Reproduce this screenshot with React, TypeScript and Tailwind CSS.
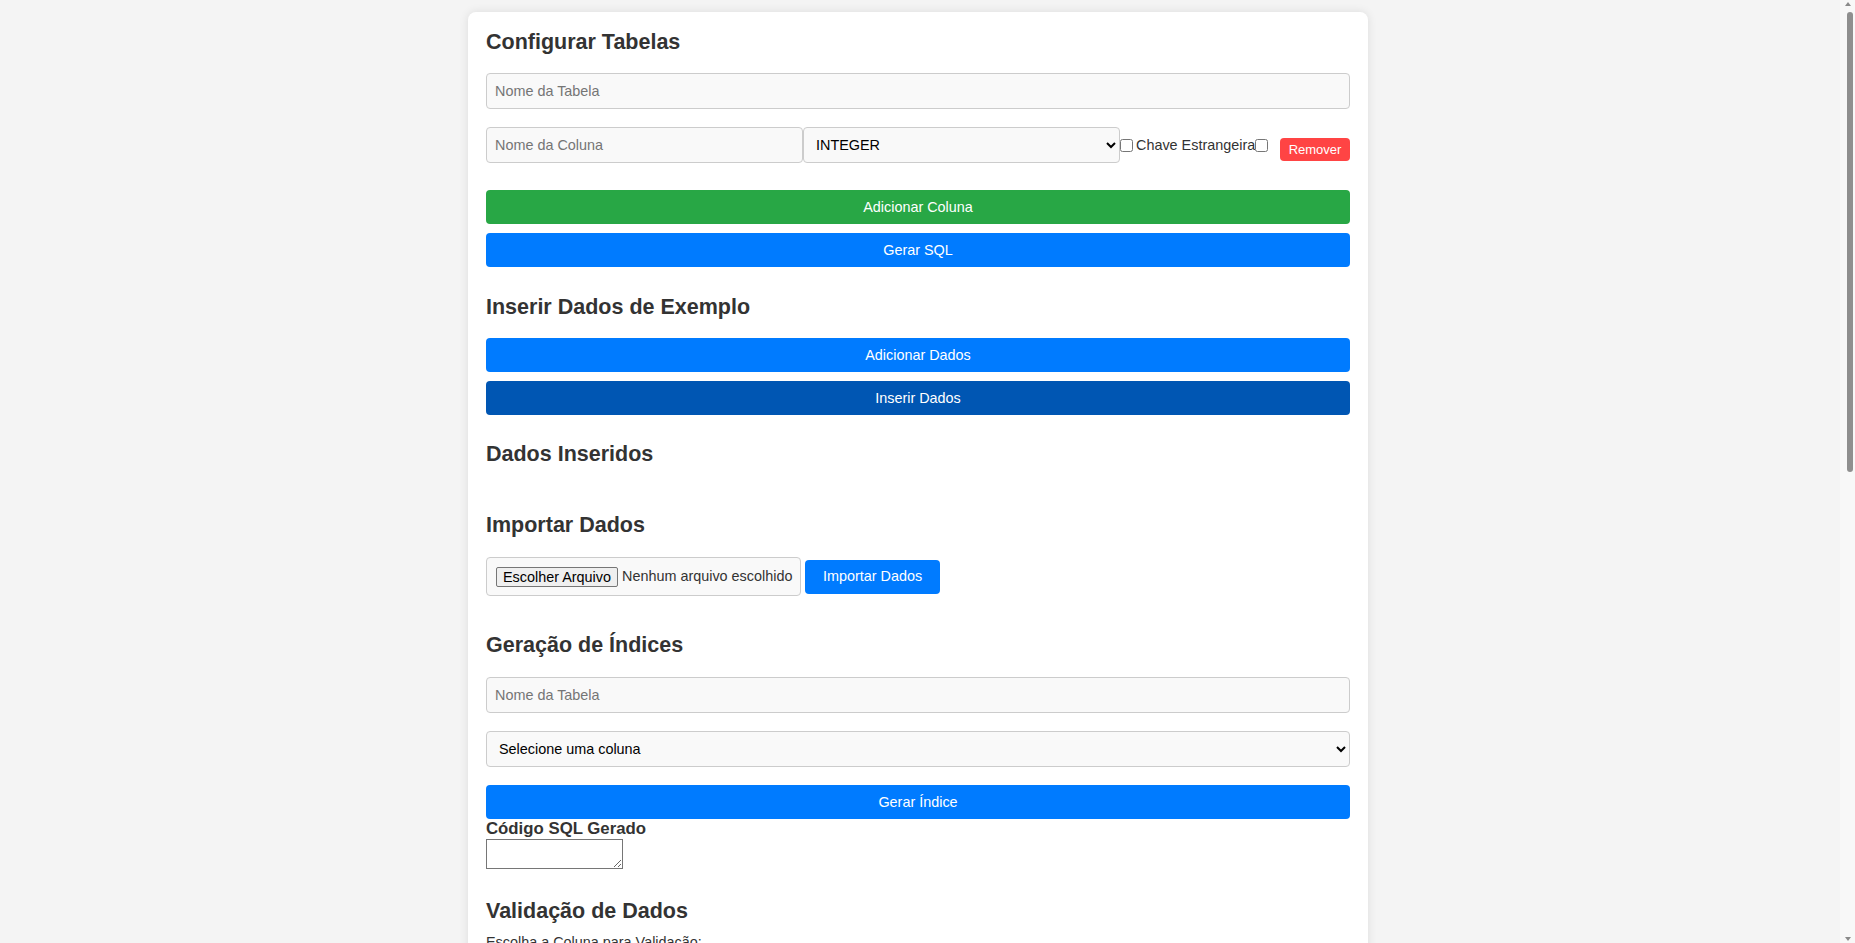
const inputCls =
  "block w-full h-[36px] px-[8px] bg-[#f9f9f9] border border-[#cccccc] rounded-[4px] text-[14.4px] text-[#333] placeholder:text-[#757575] outline-none";
const selectCls =
  "block w-full h-[36px] px-[8px] bg-[#f9f9f9] border border-[#cccccc] rounded-[4px] text-[14.4px] text-black outline-none";
const btnCls =
  "block w-full h-[34px] rounded-[4px] text-white text-[14.4px] leading-[34px] text-center";
const h2Cls = "text-[21.5px] leading-[24px] font-bold text-[#333]";

function SectionTitle({ children, className = "" }: { children: React.ReactNode; className?: string }) {
  return <h2 className={`${h2Cls} ${className}`}>{children}</h2>;
}

// window scrollbar as it shows in the screenshot
function FakeScrollbar() {
  return (
    <div className="fixed top-0 right-0 w-[15px] h-screen bg-[#f8f8f8]">
      <div className="absolute top-[2px] left-[5px] w-0 h-0 border-l-[3px] border-r-[3px] border-b-[4px] border-l-transparent border-r-transparent border-b-[#8a8a8a]" />
      <div className="absolute top-[12px] right-[2px] w-[6px] h-[460px] rounded-full bg-[#8f8f8f]" />
      <div className="absolute bottom-[2px] left-[5px] w-0 h-0 border-l-[3px] border-r-[3px] border-t-[4px] border-l-transparent border-r-transparent border-t-[#8a8a8a]" />
    </div>
  );
}

export default function App() {
  return (
    <div
      className="min-h-screen bg-[#f4f4f4] text-[#333] pr-[19px]"
      style={{ fontFamily: '"Liberation Sans", Arial, sans-serif' }}
    >
      <FakeScrollbar />
      <div className="pt-[12px] pb-[10px]">
        <div className="w-[900px] mx-auto bg-white rounded-[8px] shadow-[0_0_10px_rgba(0,0,0,0.1)] p-[18px]">
          {/* Configurar Tabelas */}
          <SectionTitle>Configurar Tabelas</SectionTitle>
          <input className={`${inputCls} mt-[19px]`} placeholder="Nome da Tabela" />

          <div className="flex items-start mt-[18px]">
            <input className={`${inputCls} !w-[317px] shrink-0`} placeholder="Nome da Coluna" />
            <select className={`${selectCls} !w-[317px] shrink-0`} defaultValue="INTEGER">
              <option>INTEGER</option>
              <option>VARCHAR(255)</option>
              <option>TEXT</option>
              <option>DATE</option>
              <option>BOOLEAN</option>
            </select>
            <input type="checkbox" className="w-[13px] h-[13px] mt-[12px] shrink-0" />
            <span className="ml-[3px] mt-[10px] text-[14.4px] leading-[16px] text-[#333] whitespace-nowrap">
              Chave Estrangeira
            </span>
            <input type="checkbox" className="w-[13px] h-[13px] mt-[12px] shrink-0" />
            <button className="ml-[auto] mt-[11px] w-[70px] h-[23px] rounded-[4px] bg-[#ff4444] text-white text-[13px] leading-[23px] text-center shrink-0">
              Remover
            </button>
          </div>

          <button className={`${btnCls} mt-[27px] bg-[#28a745]`}>Adicionar Coluna</button>
          <button className={`${btnCls} mt-[9px] bg-[#007bff]`}>Gerar SQL</button>

          {/* Inserir Dados */}
          <SectionTitle className="mt-[28px]">Inserir Dados de Exemplo</SectionTitle>
          <button className={`${btnCls} mt-[19px] bg-[#007bff]`}>Adicionar Dados</button>
          <button className={`${btnCls} mt-[9px] bg-[#0056b3]`}>Inserir Dados</button>

          <SectionTitle className="mt-[27px]">Dados Inseridos</SectionTitle>
          <div className="h-[47px]" />

          {/* Importar Dados */}
          <SectionTitle>Importar Dados</SectionTitle>
          <div className="flex items-center mt-[20px]">
            <div className="flex items-center w-[315px] h-[39px] pl-[9px] bg-[#f9f9f9] border border-[#cccccc] rounded-[4px] text-[14.4px]">
              <span className="h-[20px] px-[6px] leading-[18px] border border-[#767676] rounded-[2px] bg-[#efefef] text-black whitespace-nowrap">
                Escolher Arquivo
              </span>
              <span className="ml-[4px] text-[#333] whitespace-nowrap">Nenhum arquivo escolhido</span>
            </div>
            <button className="ml-[4px] w-[135px] h-[34px] rounded-[4px] bg-[#007bff] text-white text-[14.4px]">
              Importar Dados
            </button>
          </div>

          {/* Índices */}
          <SectionTitle className="mt-[37px]">Geração de Índices</SectionTitle>
          <input className={`${inputCls} mt-[20px]`} placeholder="Nome da Tabela" />
          <select className={`${selectCls} mt-[18px]`} defaultValue="">
            <option value="">Selecione uma coluna</option>
          </select>
          <button className={`${btnCls} mt-[18px] bg-[#007bff]`}>Gerar Índice</button>
          <label className="block text-[16.8px] leading-[19px] font-bold text-[#333]">Código SQL Gerado</label>
          <textarea className="block mt-[1px] w-[137px] h-[30px] border border-[#767676] resize" />

          {/* Validação */}
          <SectionTitle className="mt-[30px]">Validação de Dados</SectionTitle>
          <label className="block mt-[11px] text-[14.4px] leading-[16px] text-[#333]">
            Escolha a Coluna para Validação:
          </label>
          <select className={`${selectCls} mt-[10px]`} defaultValue="">
            <option value="">Selecione uma coluna</option>
          </select>
          <label className="block mt-[18px] text-[14.4px] leading-[16px] text-[#333]">Tipo de Validação:</label>
          <select className={`${selectCls} mt-[10px]`} defaultValue="notnull">
            <option value="notnull">Não Nulo</option>
            <option value="unique">Único</option>
            <option value="range">Intervalo</option>
          </select>
          <button className={`${btnCls} mt-[18px] bg-[#007bff]`}>Validar Dados</button>

          {/* Relacionamentos */}
          <SectionTitle className="mt-[37px]">Relacionamentos</SectionTitle>
          <input className={`${inputCls} mt-[20px]`} placeholder="Tabela de Origem" />
          <input className={`${inputCls} mt-[18px]`} placeholder="Tabela de Destino" />
          <select className={`${selectCls} mt-[18px]`} defaultValue="1n">
            <option value="11">Um para Um</option>
            <option value="1n">Um para Muitos</option>
            <option value="nn">Muitos para Muitos</option>
          </select>
          <button className={`${btnCls} mt-[18px] bg-[#007bff]`}>Criar Relacionamento</button>

          {/* Consultas */}
          <SectionTitle className="mt-[37px]">Consultas SQL</SectionTitle>
          <textarea
            className="block mt-[20px] w-full h-[100px] p-[8px] bg-[#f9f9f9] border border-[#cccccc] rounded-[4px] text-[14.4px] resize"
            placeholder="Digite sua consulta SQL"
          />
          <button className={`${btnCls} mt-[18px] bg-[#007bff]`}>Executar Consulta</button>

          {/* Exportar */}
          <SectionTitle className="mt-[37px]">Exportar Dados</SectionTitle>
          <button className={`${btnCls} mt-[20px] bg-[#28a745]`}>Exportar CSV</button>
          <button className={`${btnCls} mt-[9px] bg-[#007bff]`}>Exportar JSON</button>
          <button className={`${btnCls} mt-[9px] bg-[#007bff]`}>Exportar SQL</button>
        </div>
      </div>
    </div>
  );
}
